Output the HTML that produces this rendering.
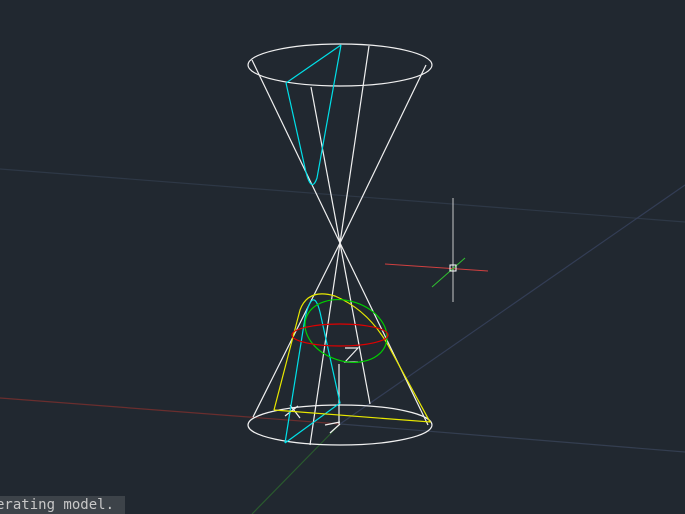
<!DOCTYPE html><html><head><style>body{margin:0;background:#212830;width:685px;height:514px;overflow:hidden;position:relative}
.t{position:absolute;left:0;top:496px;width:125px;height:18px;background:#3d4349;color:#c8c8c8;font:14px "DejaVu Sans Mono","Liberation Mono",monospace;line-height:18px;white-space:nowrap;overflow:hidden;text-indent:-4px}</style></head><body>
<svg width="685" height="514" style="position:absolute;left:0;top:0" fill="none" stroke-width="1.2">
<line x1="0" y1="169" x2="685" y2="222" stroke="#2e3846"/>
<line x1="0" y1="398" x2="340" y2="424" stroke="#6a2e2e"/>
<line x1="340" y1="424" x2="685" y2="452" stroke="#343e50"/>
<line x1="340" y1="424" x2="685" y2="185" stroke="#333d55"/>
<line x1="340" y1="424" x2="252" y2="514" stroke="#2a5a2e"/>
<g stroke="#f0f0f0">
<ellipse cx="340" cy="65" rx="92" ry="21"/>
<ellipse cx="340" cy="425" rx="92" ry="20"/>
<line x1="252" y1="60" x2="340" y2="243"/><line x1="426" y1="65" x2="340" y2="243"/>
<line x1="311" y1="87" x2="340" y2="243"/><line x1="369" y1="46" x2="340" y2="243"/>
<line x1="340" y1="243" x2="253" y2="417"/><line x1="340" y1="243" x2="428" y2="425"/>
<line x1="340" y1="243" x2="310" y2="445"/><line x1="340" y1="243" x2="370" y2="404"/>
<path d="M339 364V424M345 348H358L345 362H358M290 405L300 418M285 416L298 406M325 425L340 422M330 433L340 424"/>
</g>
<g stroke="#00e0e8">
<path d="M286 83L341 45M286 83L305 168Q311 195 317 178L341 45"/>
<path d="M285 443L305 318Q313 285 320 312L340 403L285 443"/>
</g>
<g stroke="#e8e800"><path d="M274 410L300 310Q308 288 335 296Q368 310 388 345L430 422L274 410"/></g>
<ellipse cx="346" cy="331" rx="42" ry="30" transform="rotate(18 346 331)" stroke="#00d000"/>
<ellipse cx="340" cy="335" rx="48" ry="11" stroke="#e00000"/>
<line x1="453" y1="198" x2="453" y2="302" stroke="#c8c8c8" stroke-width="1"/>
<line x1="385" y1="264" x2="488" y2="271" stroke="#d04040" stroke-width="1"/>
<line x1="432" y1="287" x2="465" y2="258" stroke="#30c030" stroke-width="1"/>
<rect x="450" y="265" width="6" height="6" stroke="#fff" stroke-width="1"/>
</svg>
<div class="t">erating model.</div>
</body></html>
